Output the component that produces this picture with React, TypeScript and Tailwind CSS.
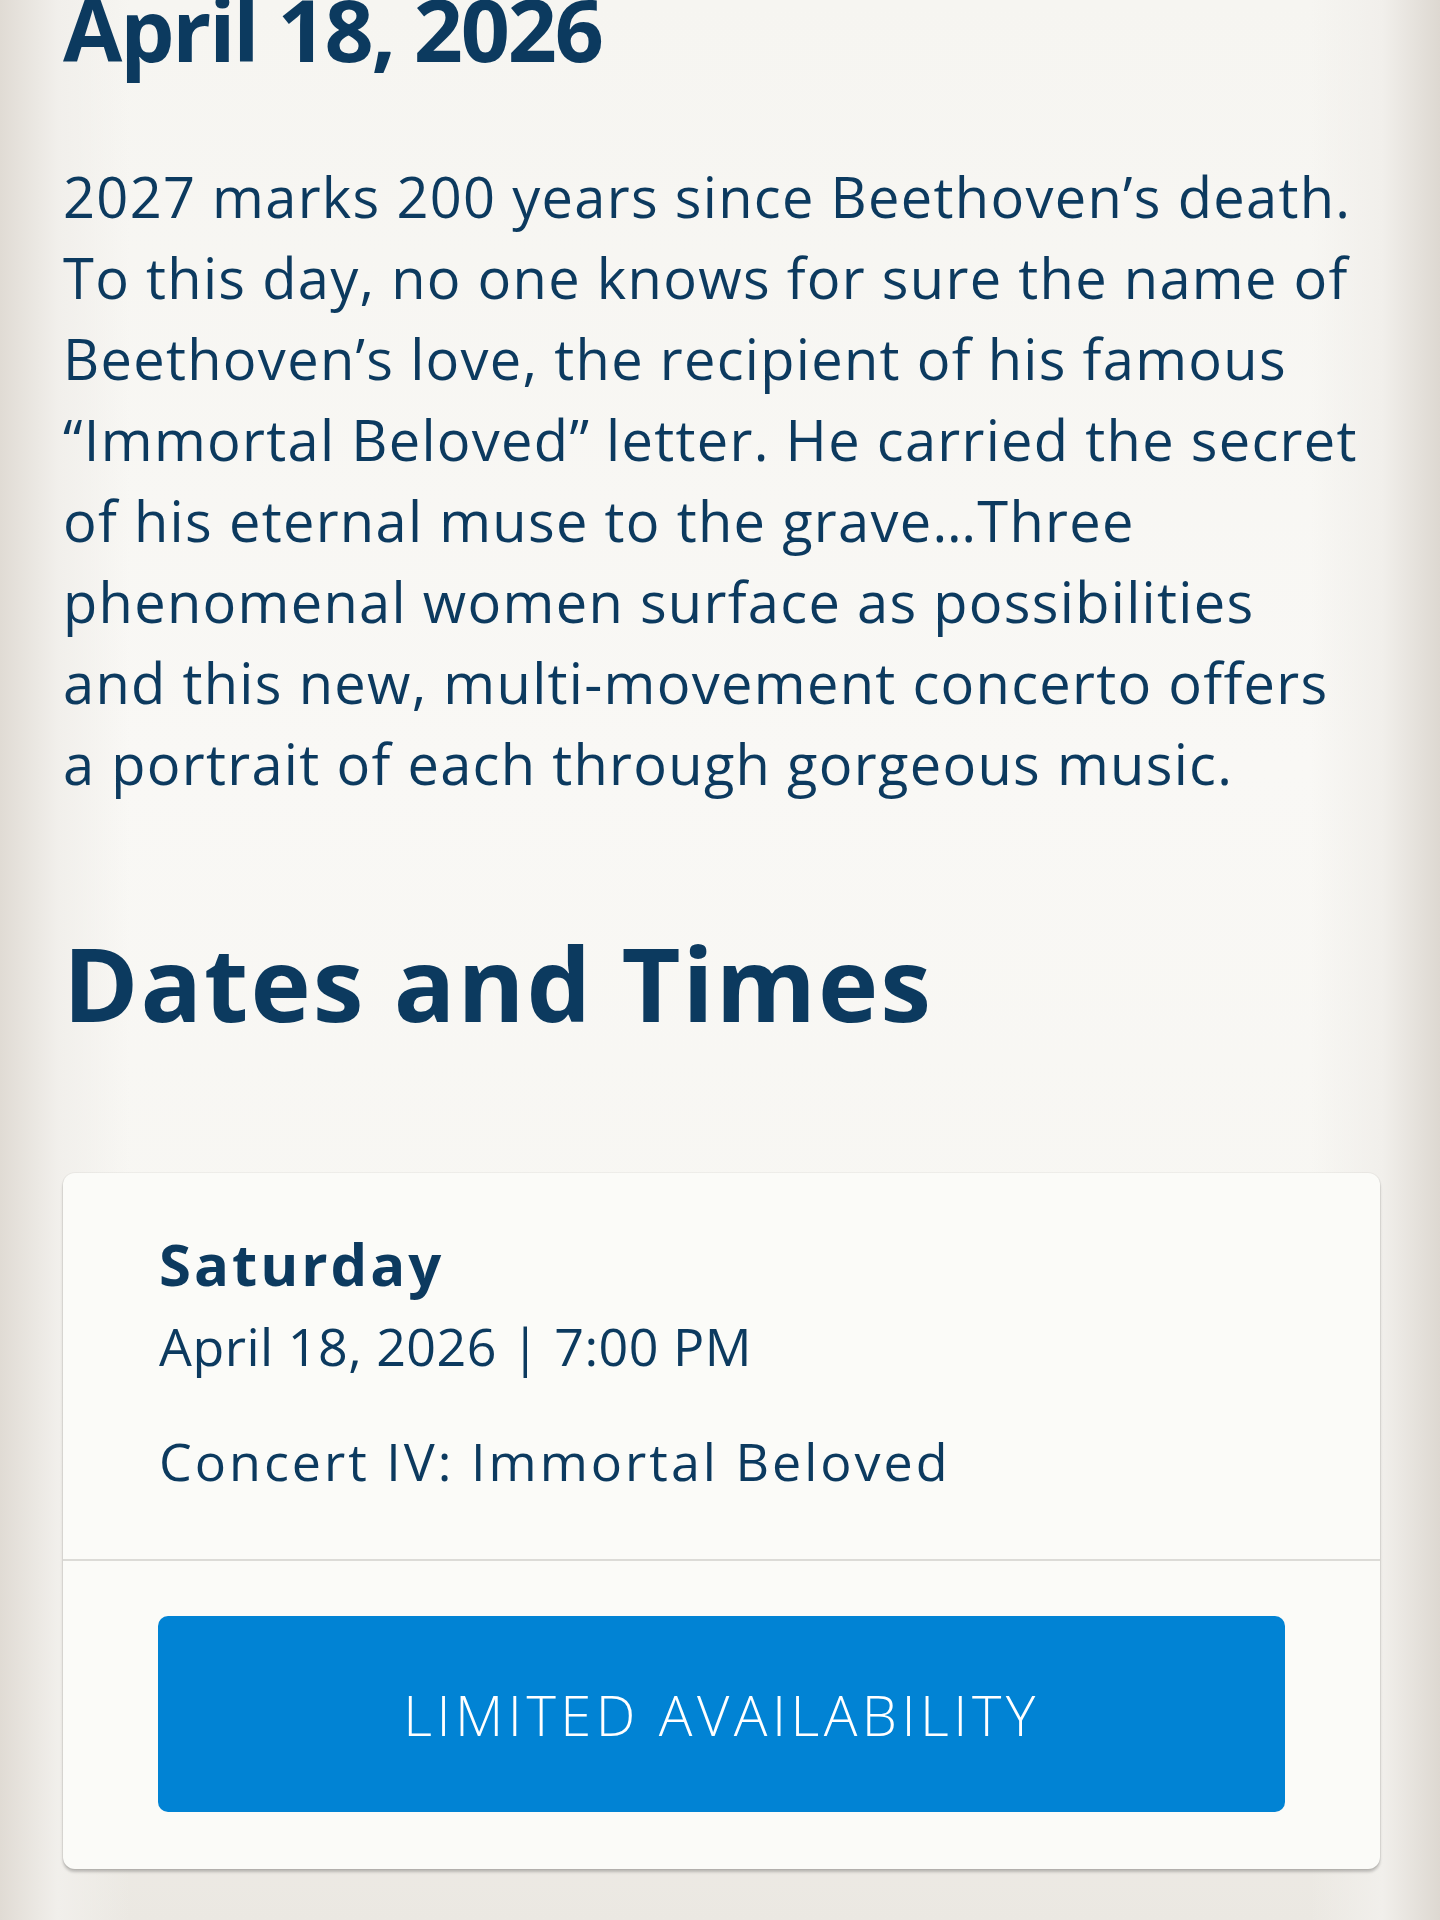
export default function App() {
  return (
    <div className="h-[1920px] overflow-hidden bg-[#f7f6f2] bg-[linear-gradient(to_right,#e0dbd4,#f1efeb_4%,rgba(247,246,242,0)_9%,rgba(247,246,242,0)_91%,#f1efeb_96%,#ddd8d1),linear-gradient(to_bottom,#f6f5f1,#f9f8f5_40%,#f7f6f2_70%,#ebe8e2)] pl-[63px] pr-[60px] font-['Open_Sans',sans-serif] text-[#0c3a5f]">
      <h1 className="mt-[-14px] text-[86px] font-bold leading-none tracking-[-2.2px]">April 18, 2026</h1>

      <p className="mt-[84px] text-[56px] leading-[81px] tracking-[1.3px]">
        2027 marks 200 years since Beethoven’s death.
        <br />
        To this day, no one knows for sure the name of
        <br />
        Beethoven’s love, the recipient of his famous
        <br />
        “Immortal Beloved” letter. He carried the secret
        <br />
        of his eternal muse to the grave…Three
        <br />
        phenomenal women surface as possibilities
        <br />
        and this new, multi-movement concerto offers
        <br />
        a portrait of each through gorgeous music.
      </p>

      <h2 className="mt-[128px] text-[102px] font-bold leading-none tracking-[2px]">Dates and Times</h2>

      <div className="mt-[139px] rounded-[12px] bg-[#fbfbf8] shadow-[0_0_0_1px_rgba(0,0,0,0.04),0_3px_3px_rgba(0,0,0,0.22)]">
        <div className="px-[96px] pt-[62px] pb-[72px]">
          <div className="text-[58px] font-bold leading-none tracking-[3px]">Saturday</div>
          <div className="mt-[27px] text-[52px] leading-none tracking-[0.5px]">April 18, 2026 | 7:00 PM</div>
          <div className="mt-[63px] text-[52px] leading-none tracking-[3px]">Concert IV: Immortal Beloved</div>
        </div>
        <div className="h-[2px] bg-[#dcdbd7]" />
        <div className="px-[95px] pt-[55px] pb-[57px]">
          <button className="flex h-[196px] w-full items-center justify-center rounded-[10px] bg-[#0183d4] text-[56px] font-light tracking-[4.5px] text-white">
            LIMITED AVAILABILITY
          </button>
        </div>
      </div>
    </div>
  );
}
